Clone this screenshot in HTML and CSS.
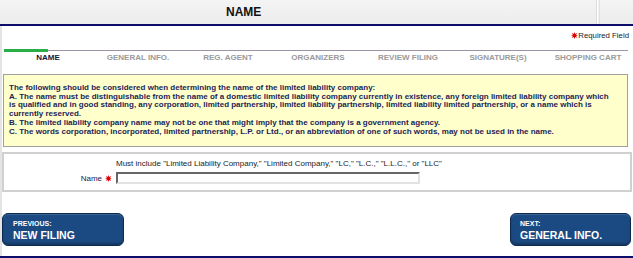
FILE: index.html
```html
<!DOCTYPE html>
<html>
<head>
<meta charset="utf-8">
<link rel="stylesheet" href="styles.css">
</head>
<body>
<div class="page">
  <div class="header">
    <div class="h-main"><span class="h-title">NAME</span></div>
    <div class="h-side"></div>
  </div>
  <div class="main">
    <div class="req"><svg class="star" viewBox="0 0 10 10" width="7" height="7"><path d="M5 0L6 3L9 1.5L7.2 4.3L10 5L7.2 5.8L9 8.5L6 7L5 10L4 7L1 8.5L2.8 5.8L0 5L2.8 4.3L1 1.5L4 3Z" fill="#e00000"/></svg>Required Field</div>
    <div class="progress"><div class="prog-done"></div><div class="prog-rest"></div></div>
    <div class="tabs">
      <div class="tab active">NAME</div>
      <div class="tab">GENERAL INFO.</div>
      <div class="tab">REG. AGENT</div>
      <div class="tab">ORGANIZERS</div>
      <div class="tab">REVIEW FILING</div>
      <div class="tab">SIGNATURE(S)</div>
      <div class="tab">SHOPPING CART</div>
    </div>
    <div class="notice">
      <div>The following should be considered when determining the name of the limited liability company:</div>
      <div>A. The name must be distinguishable from the name of a domestic limited liability company currently in existence, any foreign limited liability company which is qualified and in good standing, any corporation, limited partnership, limited liability partnership, limited liability limited partnership, or a name which is currently reserved.</div>
      <div>B. The limited liability company name may not be one that might imply that the company is a government agency.</div>
      <div>C. The words corporation, incorporated, limited partnership, L.P. or Ltd., or an abbreviation of one of such words, may not be used in the name.</div>
    </div>
    <div class="form">
      <div class="row">
        <div class="lbl"></div>
        <div class="hint">Must include "Limited Liability Company," "Limited Company," "LC," "L.C.," "L.L.C.," or "LLC"</div>
      </div>
      <div class="row field">
        <label class="lbl">Name <svg class="star" viewBox="0 0 10 10" width="7" height="7"><path d="M5 0L6 3L9 1.5L7.2 4.3L10 5L7.2 5.8L9 8.5L6 7L5 10L4 7L1 8.5L2.8 5.8L0 5L2.8 4.3L1 1.5L4 3Z" fill="#e00000"/></svg></label>
        <input class="inp" type="text">
      </div>
    </div>
    <div class="nav">
      <a class="btn"><span class="btn-small">PREVIOUS:</span><span class="btn-big">NEW FILING</span></a>
      <a class="btn btn-next"><span class="btn-small">NEXT:</span><span class="btn-big">GENERAL INFO.</span></a>
    </div>
  </div>
</div>
</body>
</html>
```
FILE: styles.css
```css
* { box-sizing: border-box; }
html, body { margin: 0; padding: 0; background: #fff; }
body { font-family: "Liberation Sans", Arial, sans-serif; }
.page { width: 633px; height: 258px; display: flex; flex-direction: column; border-bottom: 2px solid #0c0c6a; }
.header { height: 26px; display: flex; background: linear-gradient(#f4f4f4, #ececec); border-bottom: 2px solid #0c0c6a; }
.h-main { width: 597px; padding-left: 226px; border-right: 1px solid #dcdcdc; box-shadow: 1px 0 0 #fff; }
.h-title { font-weight: bold; font-size: 12px; line-height: 24px; color: #111; }
.h-side { flex: 1; margin-left: 2px; border-left: 1px solid #e2e2e2; }
.main { flex: 1; border-left: 2px solid #e4e4e4; display: flex; flex-direction: column; }
.req { margin-top: 5px; height: 9px; font-size: 7.8px; line-height: 9px; color: #222; padding-right: 4px; display: flex; justify-content: flex-end; align-items: center; }
.progress { margin-top: 9px; margin-left: 2px; width: 624px; height: 3px; display: flex; align-items: center; }
.prog-done { width: 44px; height: 3px; background: #2aae4a; }
.prog-rest { flex: 1; height: 1.5px; background: #9c94a4; }
.tabs { margin-top: 1px; margin-left: 1px; display: grid; grid-template-columns: repeat(7, 90px); }
.tab { text-align: center; font-weight: bold; font-size: 8px; line-height: 10px; color: #9a9a9a; }
.tab.active { color: #15153a; }
.notice { margin: 11px 5px 0 1px; background: #ffffcc; border: 1px solid #a0a0a0; padding: 9px 12px 10px 5px; font-weight: bold; font-size: 8px; line-height: 8.7px; color: #1d1d55; }
.form { margin: 5px 1px 0 0; border: 2px solid #d0d0d0; padding: 5px 0 6px 0; display: flex; flex-direction: column; gap: 3px; }
.row { display: flex; align-items: center; gap: 4px; }
.lbl { width: 108px; text-align: right; font-size: 8px; color: #1a1a50; display: flex; justify-content: flex-end; align-items: center; gap: 3px; }
.hint { font-size: 8px; line-height: 10px; color: #222; }
.inp { width: 304px; height: 12px; margin: 0; padding: 0; border: 2px solid; border-color: #666 #e2e2e2 #e2e2e2 #666; background: #fff; }
.nav { margin-top: 21px; display: flex; justify-content: space-between; padding-right: 2px; }
.btn { width: 122px; height: 33px; background: #1b4a82; border: 1px solid #0d2b4e; border-radius: 6px; box-shadow: inset 0 -2px 2px rgba(0,0,0,0.25), inset 0 1px 1px rgba(255,255,255,0.15); color: #fff; padding: 6px 0 0 10px; display: flex; flex-direction: column; }
.btn-next { width: 121px; padding-left: 9px; }
.btn-small { font-weight: bold; font-size: 7px; line-height: 8px; }
.btn-big { font-weight: bold; font-size: 10.5px; line-height: 14px; }
```
